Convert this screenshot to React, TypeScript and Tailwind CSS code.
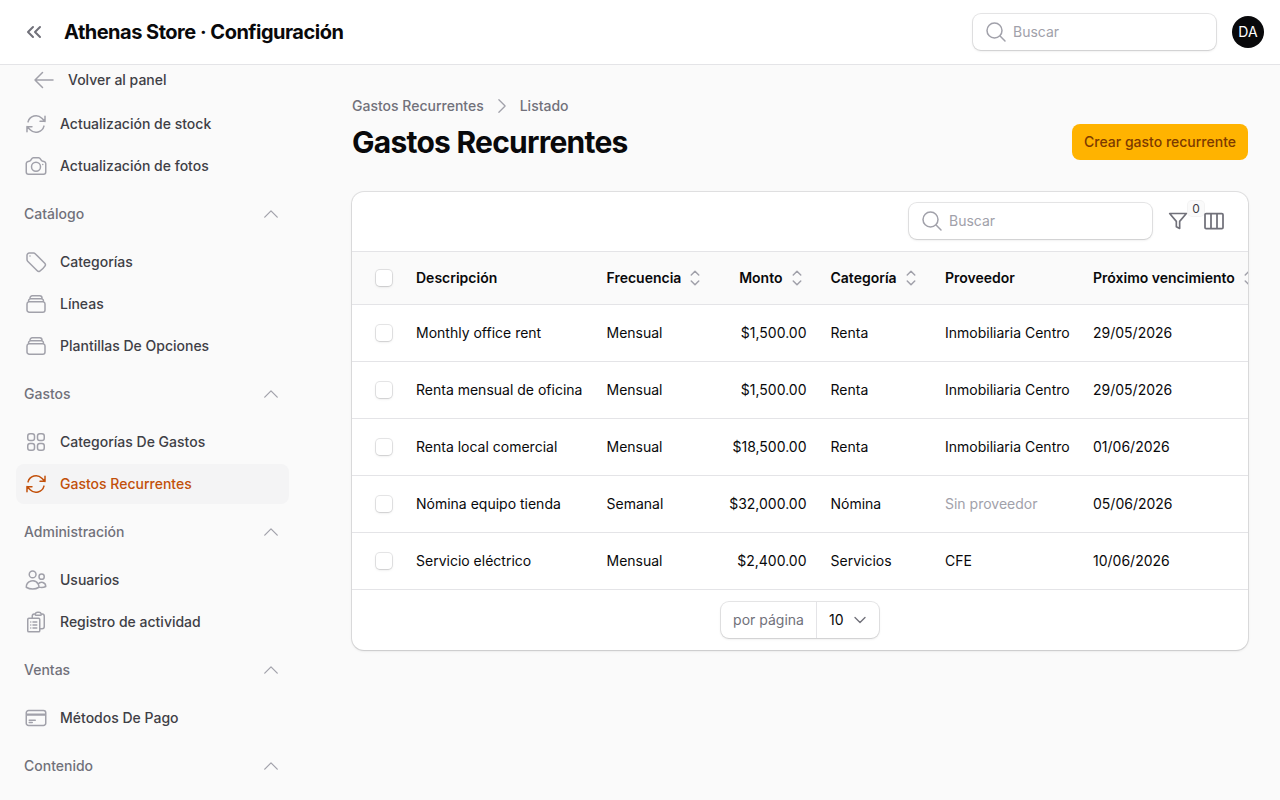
import {
  HiOutlineArrowLeft,
  HiOutlineArrowPath,
  HiOutlineCamera,
  HiOutlineChevronDown,
  HiOutlineChevronRight,
  HiOutlineChevronUp,
  HiOutlineChevronUpDown,
  HiOutlineClipboardDocumentList,
  HiOutlineCreditCard,
  HiOutlineMagnifyingGlass,
  HiOutlineRectangleStack,
  HiOutlineSquares2X2,
  HiOutlineTag,
  HiOutlineUsers,
  HiOutlineViewColumns,
} from 'react-icons/hi2';
import { FiFilter } from 'react-icons/fi';
import { ChevronsLeft } from 'lucide-react';
import type { IconType } from 'react-icons';

const rows = [
  ['Monthly office rent', 'Mensual', '$1,500.00', 'Renta', 'Inmobiliaria Centro', '29/05/2026'],
  ['Renta mensual de oficina', 'Mensual', '$1,500.00', 'Renta', 'Inmobiliaria Centro', '29/05/2026'],
  ['Renta local comercial', 'Mensual', '$18,500.00', 'Renta', 'Inmobiliaria Centro', '01/06/2026'],
  ['Nómina equipo tienda', 'Semanal', '$32,000.00', 'Nómina', 'Sin proveedor', '05/06/2026'],
  ['Servicio eléctrico', 'Mensual', '$2,400.00', 'Servicios', 'CFE', '10/06/2026'],
];

function NavItem({ icon: Icon, label, active }: { icon: IconType; label: string; active?: boolean }) {
  return (
    <div className={`flex h-10 items-center gap-3 rounded-lg px-2 ${active ? 'bg-[#f4f4f5]' : ''}`}>
      <Icon className={`h-6 w-6 shrink-0 ${active ? 'text-[#c2500a]' : 'text-[#a1a1aa]'}`} />
      <span className={`text-sm font-medium ${active ? 'text-[#c2500a]' : 'text-[#3f3f46]'}`}>{label}</span>
    </div>
  );
}

function GroupLabel({ label }: { label: string }) {
  return (
    <div className="flex h-14 items-center justify-between pl-2 pr-2">
      <span className="text-sm font-medium text-[#71717a]">{label}</span>
      <HiOutlineChevronUp className="h-5 w-5 text-[#a1a1aa]" />
    </div>
  );
}

function Search() {
  return (
    <div className="flex h-9 w-[243px] items-center gap-[5px] rounded-lg bg-white px-[11px] shadow-sm ring-1 ring-[#18181b]/10">
      <HiOutlineMagnifyingGlass className="h-6 w-6 text-[#a1a1aa]" />
      <span className="text-sm text-[#a1a1aa]">Buscar</span>
    </div>
  );
}

function Checkbox() {
  return <div className="h-4 w-4 rounded bg-white shadow-sm ring-1 ring-[#18181b]/10" />;
}

function SortHead({ label }: { label: string }) {
  return (
    <span className="flex items-center gap-0.5 whitespace-nowrap">
      {label}
      <HiOutlineChevronUpDown className="h-6 w-6 shrink-0 text-[#a1a1aa]" />
    </span>
  );
}

export default function App() {
  return (
    <div className="flex h-screen flex-col overflow-hidden bg-[#fafafa] font-['Inter',sans-serif] text-[#09090b]">
      <header className="flex h-[65px] shrink-0 items-center border-b border-[#e4e4e7] bg-white pl-[22px] pr-4">
        <ChevronsLeft className="h-6 w-6 text-[#71717a]" strokeWidth={2} />
        <h1 className="ml-[18px] text-xl font-bold tracking-tight">Athenas Store · Configuración</h1>
        <div className="ml-auto flex items-center gap-4">
          <Search />
          <div className="flex h-8 w-8 items-center justify-center rounded-full bg-[#09090b] text-sm text-white">DA</div>
        </div>
      </header>

      <div className="flex min-h-0 flex-1">
        <aside className="w-[289px] shrink-0 overflow-hidden pl-4">
          <div className="mb-[9px] flex h-[30px] items-center gap-3 pl-4">
            <HiOutlineArrowLeft className="h-6 w-6 text-[#a1a1aa]" />
            <span className="text-sm font-medium text-[#3f3f46]">Volver al panel</span>
          </div>
          <div className="flex flex-col gap-0.5">
            <NavItem icon={HiOutlineArrowPath} label="Actualización de stock" />
            <NavItem icon={HiOutlineCamera} label="Actualización de fotos" />
          </div>
          <GroupLabel label="Catálogo" />
          <div className="flex flex-col gap-0.5">
            <NavItem icon={HiOutlineTag} label="Categorías" />
            <NavItem icon={HiOutlineRectangleStack} label="Líneas" />
            <NavItem icon={HiOutlineRectangleStack} label="Plantillas De Opciones" />
          </div>
          <GroupLabel label="Gastos" />
          <div className="flex flex-col gap-0.5">
            <NavItem icon={HiOutlineSquares2X2} label="Categorías De Gastos" />
            <NavItem icon={HiOutlineArrowPath} label="Gastos Recurrentes" active />
          </div>
          <GroupLabel label="Administración" />
          <div className="flex flex-col gap-0.5">
            <NavItem icon={HiOutlineUsers} label="Usuarios" />
            <NavItem icon={HiOutlineClipboardDocumentList} label="Registro de actividad" />
          </div>
          <GroupLabel label="Ventas" />
          <NavItem icon={HiOutlineCreditCard} label="Métodos De Pago" />
          <GroupLabel label="Contenido" />
        </aside>

        <main className="min-w-0 flex-1 pl-[63px] pr-8 pt-[31px]">
          <div className="flex items-center gap-2 text-sm font-medium text-[#71717a]">
            <span>Gastos Recurrentes</span>
            <HiOutlineChevronRight className="h-5 w-5 text-[#a1a1aa]" />
            <span>Listado</span>
          </div>
          <div className="mt-[8px] flex items-center justify-between">
            <h2 className="text-[30px] leading-9 font-bold tracking-tight text-[#09090b]">Gastos Recurrentes</h2>
            <button className="flex h-9 items-center rounded-lg bg-[#ffb300] px-3 text-sm font-medium text-[#7c3a00]">
              Crear gasto recurrente
            </button>
          </div>

          <section className="mt-8 overflow-hidden rounded-xl bg-white shadow-sm ring-1 ring-[#18181b]/10">
            <div className="flex h-[60px] items-center justify-end border-b border-[#e4e4e7] pb-px pr-[22px]">
              <Search />
              <div className="relative ml-[14px] flex h-6 w-6 items-center justify-center">
                <FiFilter className="h-5 w-5 text-[#71717a]" />
                <span className="absolute left-[22px] top-[-8px] flex h-[15px] w-4 items-center justify-center rounded bg-[#fafafa] text-xs text-[#3f3f46] ring-1 ring-[#18181b]/5">
                  0
                </span>
              </div>
              <HiOutlineViewColumns className="ml-3 h-6 w-6 text-[#71717a]" strokeWidth={1.75} />
            </div>
            <div className="overflow-hidden">
              <table className="w-[920px] table-fixed text-left text-sm">
                <colgroup>
                  <col className="w-[52px]" />
                  <col className="w-[190px]" />
                  <col className="w-[120px]" />
                  <col className="w-[104px]" />
                  <col className="w-[115px]" />
                  <col className="w-[148px]" />
                  <col className="w-[191px]" />
                </colgroup>
                <thead>
                  <tr className="h-[52px] border-b border-[#e4e4e7] bg-[#fafafa]">
                    <th className="pl-6">
                      <Checkbox />
                    </th>
                    <th className="px-3 font-semibold">Descripción</th>
                    <th className="pl-[12.5px] pr-3 font-semibold">
                      <SortHead label="Frecuencia" />
                    </th>
                    <th className="pl-3 pr-[9.5px] font-semibold">
                      <span className="flex justify-end">
                        <SortHead label="Monto" />
                      </span>
                    </th>
                    <th className="pl-[12.5px] pr-3 font-semibold">
                      <SortHead label="Categoría" />
                    </th>
                    <th className="px-3 font-semibold">Proveedor</th>
                    <th className="px-3 font-semibold">
                      <SortHead label="Próximo vencimiento" />
                    </th>
                  </tr>
                </thead>
                <tbody>
                  {rows.map((row) => (
                    <tr key={row[0]} className="h-[57px] border-b border-[#e4e4e7]">
                      <td className="pl-6">
                        <Checkbox />
                      </td>
                      <td className="px-3 whitespace-nowrap">{row[0]}</td>
                      <td className="pl-[12.5px] pr-3">{row[1]}</td>
                      <td className="pl-3 pr-[11.5px] text-right">{row[2]}</td>
                      <td className="pl-[12.5px] pr-3">{row[3]}</td>
                      <td className={`px-3 whitespace-nowrap ${row[4] === 'Sin proveedor' ? 'text-[#a1a1aa]' : ''}`}>{row[4]}</td>
                      <td className="px-3">{row[5]}</td>
                    </tr>
                  ))}
                </tbody>
              </table>
            </div>
            <div className="flex h-[60px] items-center justify-center">
              <div className="flex h-9 w-[158px] items-center rounded-lg bg-white text-sm shadow-sm ring-1 ring-[#18181b]/10">
                <span className="flex h-full w-[96px] items-center justify-center border-r border-[#e4e4e7] text-[#71717a]">por página</span>
                <span className="ml-3">10</span>
                <HiOutlineChevronDown className="ml-2 h-4 w-4 text-[#71717a]" strokeWidth={2} />
              </div>
            </div>
          </section>
        </main>
      </div>
    </div>
  );
}
